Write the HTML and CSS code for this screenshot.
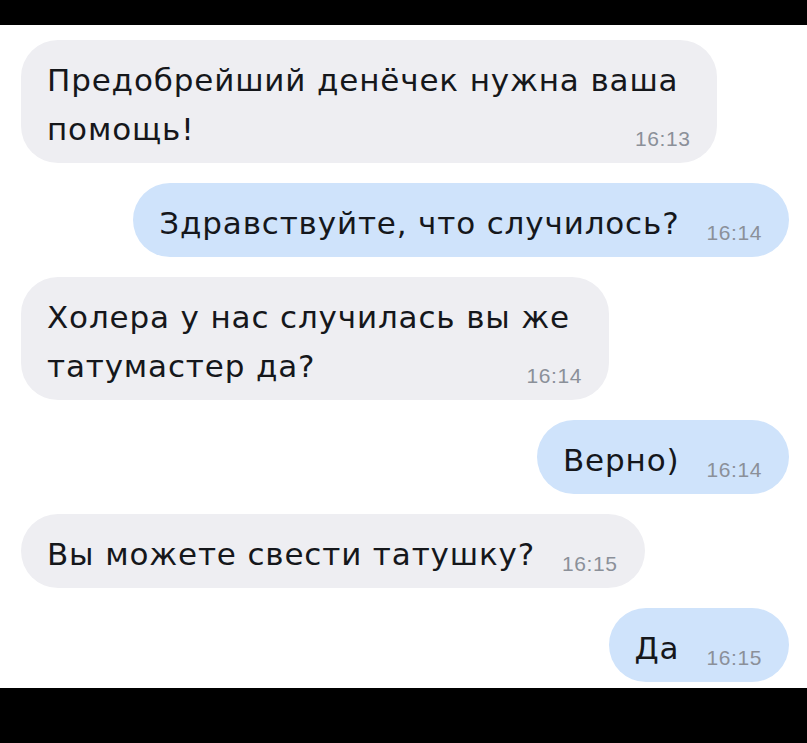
FILE: index.html
```html
<!DOCTYPE html>
<html lang="ru">
<head>
<meta charset="utf-8">
<title>Чат</title>
<link rel="stylesheet" href="styles.css">
</head>
<body>
<div class="screen">
  <div class="bar top"></div>
  <div class="chat">
    <div class="bubble in">
      <div class="line first">Предобрейший денёчек нужна ваша</div>
      <div class="line last"><span class="msg">помощь!</span> <span class="time">16:13</span></div>
    </div>
    <div class="bubble out"><span class="msg">Здравствуйте, что случилось?</span><span class="time">16:14</span></div>
    <div class="bubble in">
      <div class="line first">Холера у нас случилась вы же</div>
      <div class="line last"><span class="msg">татумастер да?</span> <span class="time">16:14</span></div>
    </div>
    <div class="bubble out"><span class="msg">Верно)</span><span class="time">16:14</span></div>
    <div class="bubble in"><span class="msg">Вы можете свести татушку?</span><span class="time">16:15</span></div>
    <div class="bubble out"><span class="msg">Да</span><span class="time">16:15</span></div>
  </div>
  <div class="bar bottom"></div>
</div>
</body>
</html>
```
FILE: styles.css
```css
html, body {
  margin: 0;
  padding: 0;
  background: #000;
}
.screen {
  width: 807px;
  height: 743px;
  display: flex;
  flex-direction: column;
  font-family: "DejaVu Sans", "Liberation Sans", Arial, sans-serif;
}
.bar {
  background: #000;
}
.bar.top {
  height: 25px;
}
.bar.bottom {
  flex: 1;
}
.chat {
  height: 663px;
  box-sizing: border-box;
  background: #fff;
  padding: 15px 18px 0 21px;
  display: flex;
  flex-direction: column;
  gap: 20px;
  overflow: hidden;
}
.bubble {
  font-size: 31px;
  line-height: 49px;
  letter-spacing: 0.85px;
  color: #15171b;
  padding: 16px 27px 9px 26px;
  border-radius: 37px;
  white-space: nowrap;
}
.bubble.in {
  align-self: flex-start;
  background: #eeeef2;
}
.bubble.out {
  align-self: flex-end;
  background: #cfe3fb;
}
.line.first {
  padding-right: 12px;
}
.line.last {
  text-align: justify;
  text-align-last: justify;
}
.line.last .msg {
  display: inline-block;
}
.time {
  display: inline-block;
  font-family: "Liberation Sans", Arial, sans-serif;
  font-size: 21px;
  line-height: 21px;
  letter-spacing: 0.6px;
  color: #8b9099;
  margin-left: 27px;
  vertical-align: -6px;
}
```
